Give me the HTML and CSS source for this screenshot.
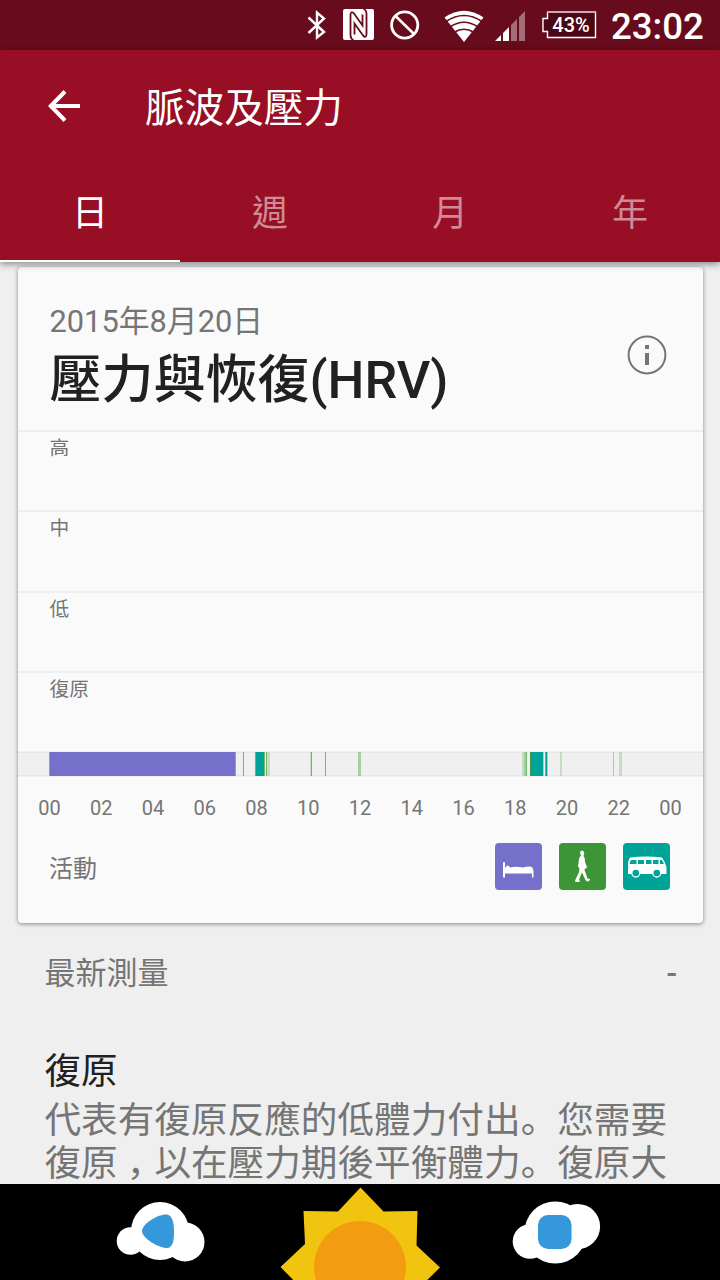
FILE: index.html
```html
<!DOCTYPE html>
<html lang="zh-Hant">
<head>
<meta charset="utf-8">
<title>脈波及壓力</title>
<link rel="stylesheet" href="styles.css">
</head>
<body>
<div class="screen">
  <div class="status">
    <svg class="status-icons" width="310" height="50" viewBox="290 0 310 50">
      <path d="M308.500 17.500 324 32 317 37.500V12.500L324 18.500 308.500 33" fill="none" stroke="#fff" stroke-width="2.400"/>
      <rect x="343" y="9" width="31" height="31" rx="2" fill="#fff"/>
      <path d="M353.500 40Q350.500 39 350.500 35V14.500Q351 10.500 354 13.500L362.500 25.500V14.500M363.500 9Q366.500 10 366.500 14V34.500Q366 38.500 363 35.500L354.500 23.500V34.500" stroke="#680b1c" stroke-width="1.800" fill="none"/>
      <circle cx="404.700" cy="25" r="13.100" fill="none" stroke="#fff" stroke-width="2.800"/>
      <path d="M395.500 16 414 34" stroke="#fff" stroke-width="2.600"/>
      <path d="M464 42 444.500 17.500Q464 4 483.500 17.500Z" fill="#fff"/>
      <path d="M446 21.500Q464 9.500 482 21.500M450 27Q464 17.500 478 27M454 32.500Q464 26 474 32.500" stroke="#680b1c" stroke-width="1.700" fill="none"/>
      <path d="M495 41 501 35V41Z M503 33 509 27V41H503Z" fill="#fff"/>
      <path d="M511 25 517 19V41H511Z M519 17 525 11V41H519Z" fill="#a56d77"/>
      <path d="M547.500 12H595.500V37.500H547.500V31.500H543V18.500H547.500Z" fill="#4b0814" stroke="#fff" stroke-width="1.400"/>
      <path d="M547 12H596" stroke="#cba9af" stroke-width="2"/>
      <text x="571" y="31.500" text-anchor="middle" class="battery-text">43%</text>
    </svg>
    <div class="clock">23:02</div>
  </div>
  <header class="appbar">
    <div class="titlebar">
      <svg class="back" width="36" height="36" viewBox="0 0 36 36"><path d="M19 3.500 4.800 18 19 32.500M5 18H34" fill="none" stroke="#fff" stroke-width="4"/></svg>
      <h1 class="page-title">脈波及壓力</h1>
    </div>
    <nav class="tabs">
      <div class="tab active">日</div><div class="tab">週</div><div class="tab">月</div><div class="tab">年</div>
    </nav>
  </header>
  <main class="content">
    <section class="card">
      <div class="card-head">
        <div>
          <div class="date">2015年8月20日</div>
          <h2 class="card-title">壓力與恢復(HRV)</h2>
        </div>
        <svg class="info" width="40" height="40" viewBox="0 0 40 40"><circle cx="20" cy="20" r="18.400" fill="none" stroke="#757575" stroke-width="2"/><path d="M18 10H22V14H18ZM18 18H22V30H18Z" fill="#757575"/></svg>
      </div>
      <div class="level">高</div>
      <div class="level">中</div>
      <div class="level">低</div>
      <div class="level">復原</div>
      <svg class="timeline" width="685" height="26" viewBox="18 751 685 26">
        <path fill="#f0f0f0" d="M18 751H703V777H18Z"/>
        <path fill="#e6e6e6" d="M18 752H703V753H18ZM18 775H703V776H18Z"/>
        <path fill="#7571ca" d="M49.300 752H235.700V776H49.300Z"/>
        <path fill="#00a398" d="M255.300 752H264V776H255.300ZM531 752H543V776H531ZM545.300 752H547.200V776H545.300Z"/>
        <path fill="#79b476" d="M243 752H244V776H243ZM264 752H265V776H264ZM266 752H267V776H266ZM311 752H312V776H311ZM325 752H326V776H325ZM526 752H527V776H526Z"/>
        <path fill="#409b3a" d="M530 752H531V776H530Z"/>
        <path fill="#a5cda3" d="M358 752H361V776H358ZM524 752H526V776H524ZM613 752H614V776H613Z"/>
        <path fill="#c5dec3" d="M267 752H270V776H267ZM310 752H311V776H310ZM522 752H524V776H522ZM560 752H562V776H560ZM619 752H622V776H619Z"/>
        <path fill="#99d5d0" d="M543 752H544V776H543ZM547 752H548V776H547Z"/>
      </svg>
      <div class="axis"><span>00</span><span>02</span><span>04</span><span>06</span><span>08</span><span>10</span><span>12</span><span>14</span><span>16</span><span>18</span><span>20</span><span>22</span><span>00</span></div>
      <div class="activity">
        <span class="activity-label">活動</span>
        <svg width="47" height="47" viewBox="0 0 47 47"><rect width="47" height="47" rx="4" fill="#7571ca"/><path fill="#fff" d="M8 19.500Q9 18.500 10 19.500V25L12 22.500Q14 22.500 15 24.500Q21 23 28 24.500Q34 23 37 24Q38 26 38.500 28V34.500H37V30.500H10V34.500H8Z"/></svg>
        <svg width="47" height="47" viewBox="0 0 47 47"><rect width="47" height="47" rx="4" fill="#3c9637"/><path fill="#fff" d="M21 10Q21 7.500 23.200 7.500Q25.500 8 25.200 11L24.500 13Q26 14.500 26 19L28 24Q27.500 26 26 25.500L25.500 27L28.500 35.500 31 36Q31 38 28 38.500L26.500 37 23 29.500 20 36.500 21 38.500Q18 39.500 16 38.500L16.500 36.500 20 29 20.500 25 19 24 20 16Q20.300 14 22 12.500Z"/></svg>
        <svg width="47" height="47" viewBox="0 0 47 47"><rect width="47" height="47" rx="4" fill="#00a398"/><path fill="#fff" d="M7 14.500Q23 12.500 39 14.500Q42 19 43.500 24V31H5V19Z"/><path fill="#00a398" d="M8 17H13.500V21H6.500ZM15 17H21V21H15ZM23 17H28.500V21H23ZM30 17H35.500V21H30ZM37 17H39L41 21H37Z"/><g fill="#00a398" stroke="#fff" stroke-width="1.300"><circle cx="12.800" cy="30" r="4"/><circle cx="33.800" cy="30" r="4"/></g></svg>
      </div>
    </section>
    <section class="latest"><span>最新測量</span><span class="latest-value">-</span></section>
    <section class="explain">
      <h3 class="explain-title">復原</h3>
      <p class="explain-text">代表有復原反應的低體力付出<span class="stop" lang="zh-Hans">。</span>您需要<br>復原<span class="comma" lang="zh-Hans">&#65292;</span>以在壓力期後平衡體力<span class="stop" lang="zh-Hans">。</span>復原大</p>
    </section>
  </main>
  <nav class="navbar">
    <svg width="720" height="96" viewBox="0 1184 720 96">
      <g fill="#fff"><circle cx="160" cy="1231" r="29"/><circle cx="130.500" cy="1241" r="13.800"/><circle cx="185" cy="1242" r="19.500"/><circle cx="555.300" cy="1232.500" r="31"/><circle cx="577.500" cy="1226.500" r="22.600"/><circle cx="530" cy="1241.500" r="17.300"/></g>
      <path d="M142 1231C142 1224 157 1214.500 166 1214.500C172 1214.500 174 1222 174 1231.500C174 1240 173 1248 167 1248C158 1248 142 1238 142 1231Z" fill="#3598db"/>
      <rect x="538" y="1215" width="33.500" height="34" rx="10" fill="#3598db"/>
      <path d="M360.500 1187.500 383.500 1211.500 417.500 1211 416.500 1245.500 440 1267.500 416 1291H304L280.500 1267 305 1244 303.500 1211 338 1211.500Z" fill="#f1c40f"/>
      <circle cx="360" cy="1267" r="46" fill="#f39c12"/>
    </svg>
  </nav>
</div>
</body>
</html>
```
FILE: styles.css
```css
* { box-sizing: border-box; }
body { margin: 0; background: #efefef; font-family: Roboto, "Noto Sans CJK TC", sans-serif; }
h1, h2, h3, p { margin: 0; font-weight: 400; }
svg { display: block; flex: none; }
.screen { width: 720px; height: 1280px; overflow: hidden; display: flex; flex-direction: column; }
.status { flex: none; height: 50px; background: #680b1c; display: flex; padding-left: 290px; color: #fff; }
.battery-text { font: 500 20px Roboto, sans-serif; fill: #fff; }
.clock { margin-left: 11px; font-size: 36.6px; font-weight: 500; line-height: 53px; }
.appbar { flex: none; height: 212px; background: #980e25; color: #fff; position: relative; z-index: 1; box-shadow: 0 2px 7px rgba(0,0,0,.45); }
.titlebar { height: 112px; display: flex; align-items: center; padding-left: 46px; }
.page-title { margin-left: 63px; padding-top: 5px; font-size: 39.6px; line-height: 60px; }
.tabs { display: flex; height: 100px; }
.tab { flex: 1; text-align: center; font-size: 36px; line-height: 105px; color: #cf8b95; }
.tab.active { color: #fff; border-bottom: 2px solid #fff; }
.content { flex: 1; min-height: 0; overflow: hidden; padding-top: 5px; }
.card { margin: 0 17px 0 18px; height: 656px; border-radius: 4px; background: #fafafa; box-shadow: 0 1px 4px rgba(0,0,0,.45); overflow: hidden; }
.card-head { height: 163px; display: flex; justify-content: space-between; padding: 33px 36px 0 31.5px; }
.date { font-size: 30.8px; line-height: 44px; color: #757575; }
.card-title { font-size: 52px; line-height: 74px; font-weight: 500; color: #212121; }
.info { margin-top: 35px; }
.level { height: 80.300px; border-top: 2px solid #eee; padding-left: 31.5px; font-size: 19.8px; line-height: 33px; color: #757575; }
.timeline { margin-top: 0; }
.axis { margin: 16px 5.5px 0 5.5px; display: flex; color: #757575; font-size: 20px; line-height: 30px; }
.axis span { flex: 0 0 51.770px; text-align: center; }
.activity { display: flex; align-items: center; gap: 17px; padding: 20px 33px 0 31px; }
.activity-label { flex: 1; padding-top: 4px; font-size: 24px; line-height: 40px; color: #757575; }
.latest { display: flex; justify-content: space-between; padding: 29px 43px 0 44.5px; font-size: 31px; line-height: 44px; color: #757575; }
.latest-value { font-weight: 500; }
.explain { padding: 50px 0 0 44.5px; }
.explain-title { font-size: 36.600px; line-height: 52px; color: #212121; }
.explain-text { padding-top: 1px; font-size: 36.640px; line-height: 43px; color: #757575; white-space: nowrap; }
.stop, .comma { font-family: "Noto Sans CJK SC", sans-serif; line-height: 20px; }
.comma { padding-left: 9px; margin-right: -9px; }
.navbar { flex: none; height: 96px; background: #000; }
```
